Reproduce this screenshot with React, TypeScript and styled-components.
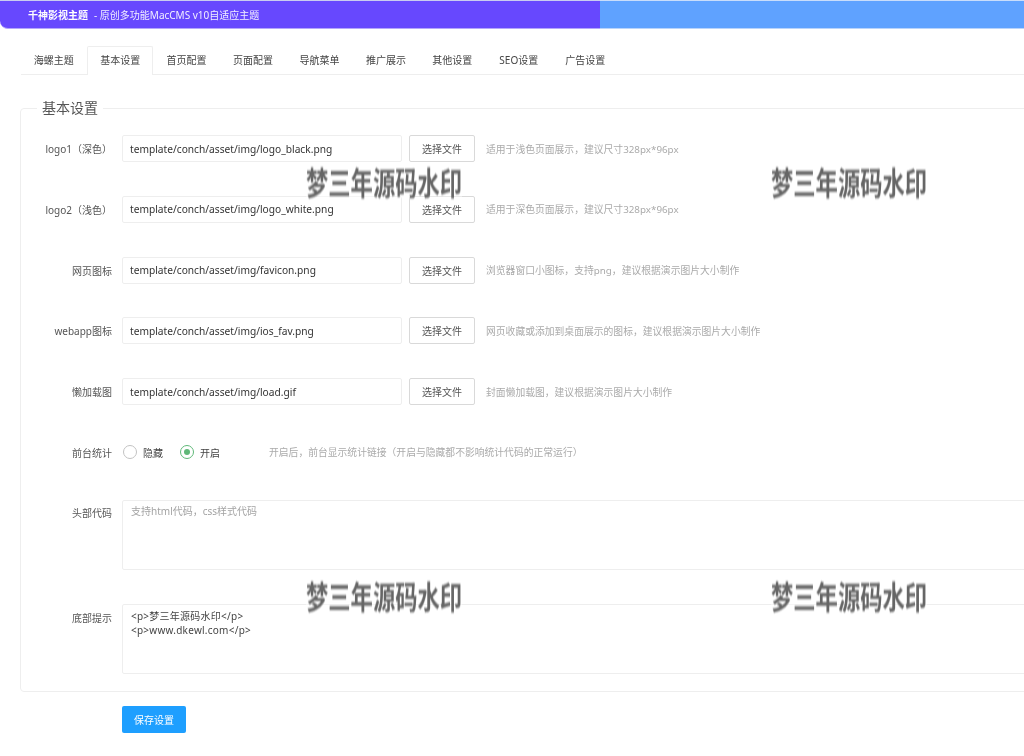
import React from 'react';
import styled, { createGlobalStyle } from 'styled-components';

const GlobalStyle = createGlobalStyle`
  html, body {
    margin: 0;
    padding: 0;
    height: 100%;
    overflow: hidden;
    background: #fff;
  }
  body {
    font-family: "Noto Sans", "Noto Sans CJK SC", sans-serif;
    font-size: 10px;
    color: #555;
  }
`;

const Page = styled.div`
  position: relative;
  width: 1024px;
  height: 756px;
  overflow: hidden;
  filter: blur(0.3px);
`;

const Banner = styled.header`
  display: flex;
  height: 29px;
`;

const BannerTitle = styled.div`
  width: 600px;
  padding-left: 28px;
  box-sizing: border-box;
  display: flex;
  align-items: center;
  gap: 6px;
  background: #6748fe;
  border-top: 1px solid #c9ccf0;
  border-bottom: 1px solid #b5a6fb;
  border-bottom-left-radius: 8px;
  color: #f2efff;
  font-size: 10px;
  strong {
    font-weight: 700;
    color: #fff;
  }
`;

const BannerFill = styled.div`
  flex: 1;
  background: #5fa2ff;
  border-top: 1px solid #c9ddfb;
  border-bottom: 1px solid #b9d4fb;
`;

const Tabs = styled.nav`
  display: flex;
  margin: 17px 0 0 20.5px;
  height: 28px;
  border-bottom: 1px solid #eee;
`;

const Tab = styled.div<{ $active?: boolean }>`
  box-sizing: border-box;
  flex: none;
  width: 66.45px;
  height: ${p => (p.$active ? '29px' : '28px')};
  padding-bottom: ${p => (p.$active ? '3px' : '2px')};
  display: flex;
  align-items: center;
  justify-content: center;
  color: #444;
  font-size: 10px;
  background: #fff;
  border: 1px solid ${p => (p.$active ? '#eee' : 'transparent')};
  border-bottom: none;
  border-radius: 2px 2px 0 0;
`;

const Fieldset = styled.fieldset`
  box-sizing: border-box;
  width: 1140px;
  margin: 23px 0 0 20px;
  padding: 17px 0 17px 0;
  border: 1px solid #eee;
  border-radius: 4px;
`;

const Legend = styled.legend`
  margin-left: 16px;
  padding: 0 5px;
  height: 20px;
  line-height: 20px;
  font-size: 14px;
  color: #555;
`;

const Row = styled.div<{ $last?: boolean }>`
  display: flex;
  align-items: center;
  min-height: 27px;
  margin-bottom: ${p => (p.$last ? '0' : '33.75px')};
`;

const TextRow = styled(Row)`
  align-items: flex-start;
  margin-bottom: ${p => (p.$last ? '0' : '34.5px')};
`;

const Label = styled.label<{ $top?: boolean }>`
  flex: none;
  width: 91px;
  text-align: right;
  font-size: 10px;
  color: #555;
  white-space: nowrap;
  margin-right: 10px;
  padding-top: ${p => (p.$top ? '5.5px' : '0')};
`;

const TextInput = styled.input`
  box-sizing: border-box;
  width: 280px;
  height: 27px;
  padding: 0 7px;
  border: 1px solid #eee;
  border-radius: 2px;
  outline: none;
  font: 10.2px "Noto Sans", "Noto Sans CJK SC", sans-serif;
  color: #333;
`;

const FileButton = styled.button`
  box-sizing: border-box;
  width: 66px;
  height: 27px;
  margin-left: 7px;
  padding: 0;
  background: #fff;
  border: 1px solid #d9d9d9;
  border-radius: 2px;
  font: 10px "Noto Sans", "Noto Sans CJK SC", sans-serif;
  color: #555;
`;

const Hint = styled.span<{ $wide?: boolean }>`
  margin-left: ${p => (p.$wide ? '33px' : '11px')};
  font-size: 9.8px;
  color: #aaa;
  white-space: nowrap;
`;

const Radio = styled.span<{ $on?: boolean }>`
  box-sizing: border-box;
  flex: none;
  width: 14px;
  height: 14px;
  margin-left: 1px;
  border-radius: 50%;
  border: 1px solid ${p => (p.$on ? '#5fb878' : '#c2c2c2')};
  display: flex;
  align-items: center;
  justify-content: center;
  &::after {
    content: "";
    display: ${p => (p.$on ? 'block' : 'none')};
    width: 6px;
    height: 6px;
    border-radius: 50%;
    background: #5fb878;
  }
`;

const RadioText = styled.span`
  width: 36px;
  margin-left: 6px;
  font-size: 10px;
  color: #444;
`;

const CodeArea = styled.textarea`
  box-sizing: border-box;
  display: block;
  width: 1010px;
  height: 70px;
  padding: 3.5px 8px;
  border: 1px solid #eee;
  border-radius: 2px;
  outline: none;
  resize: none;
  font: 10px/14px "Noto Sans", "Noto Sans CJK SC", sans-serif;
  letter-spacing: 0.25px;
  color: #444;
  &::placeholder {
    color: #a3a3a3;
    letter-spacing: 0;
  }
`;

const SaveButton = styled.button`
  display: block;
  width: 64px;
  height: 27px;
  margin: 14px 0 0 122px;
  padding: 0;
  border: none;
  border-radius: 2px;
  background: #1e9fff;
  color: #fff;
  font: 10px "Noto Sans", "Noto Sans CJK SC", sans-serif;
`;

const Watermark = styled.div<{ $x: number; $y: number }>`
  position: absolute;
  left: ${p => p.$x}px;
  top: ${p => p.$y}px;
  font: 700 22.3px/24px "Noto Sans CJK SC", sans-serif;
  color: #666;
  white-space: nowrap;
  background: rgba(255, 255, 255, 0.45);
  transform: scaleY(1.42);
  filter: blur(0.6px);
`;

const tabs = ['海螺主题', '基本设置', '首页配置', '页面配置', '导航菜单', '推广展示', '其他设置', 'SEO设置', '广告设置'];

const files = [
  { label: 'logo1（深色）', value: 'template/conch/asset/img/logo_black.png', hint: '适用于浅色页面展示，建议尺寸328px*96px' },
  { label: 'logo2（浅色）', value: 'template/conch/asset/img/logo_white.png', hint: '适用于深色页面展示，建议尺寸328px*96px' },
  { label: '网页图标', value: 'template/conch/asset/img/favicon.png', hint: '浏览器窗口小图标，支持png，建议根据演示图片大小制作' },
  { label: 'webapp图标', value: 'template/conch/asset/img/ios_fav.png', hint: '网页收藏或添加到桌面展示的图标，建议根据演示图片大小制作' },
  { label: '懒加载图', value: 'template/conch/asset/img/load.gif', hint: '封面懒加载图，建议根据演示图片大小制作' },
];

const marks = [
  { x: 306, y: 169 },
  { x: 771, y: 169 },
  { x: 306, y: 583 },
  { x: 771, y: 583 },
];

export default function App() {
  return (
    <Page>
      <GlobalStyle />
      <Banner>
        <BannerTitle>
          <strong>千神影视主题</strong>
          <span>- 原创多功能MacCMS v10自适应主题</span>
        </BannerTitle>
        <BannerFill />
      </Banner>
      <Tabs>
        {tabs.map((t, i) => (
          <Tab key={t} $active={i === 1}>{t}</Tab>
        ))}
      </Tabs>
      <Fieldset>
        <Legend>基本设置</Legend>
        {files.map(f => (
          <Row key={f.label}>
            <Label>{f.label}</Label>
            <TextInput defaultValue={f.value} />
            <FileButton>选择文件</FileButton>
            <Hint>{f.hint}</Hint>
          </Row>
        ))}
        <Row>
          <Label>前台统计</Label>
          <Radio />
          <RadioText>隐藏</RadioText>
          <Radio $on />
          <RadioText>开启</RadioText>
          <Hint $wide>开启后，前台显示统计链接（开启与隐藏都不影响统计代码的正常运行）</Hint>
        </Row>
        <TextRow>
          <Label $top>头部代码</Label>
          <CodeArea placeholder="支持html代码，css样式代码" />
        </TextRow>
        <TextRow $last>
          <Label $top>底部提示</Label>
          <CodeArea defaultValue={'<p>梦三年源码水印</p>\n<p>www.dkewl.com</p>'} />
        </TextRow>
      </Fieldset>
      <SaveButton>保存设置</SaveButton>
      {marks.map(m => (
        <Watermark key={`${m.x}-${m.y}`} $x={m.x} $y={m.y}>梦三年源码水印</Watermark>
      ))}
    </Page>
  );
}
